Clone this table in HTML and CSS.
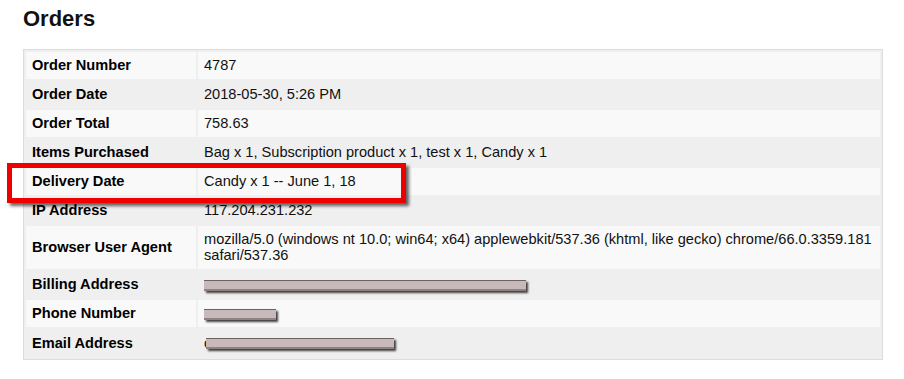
FILE: index.html
```html
<!DOCTYPE html>
<html>
<head>
<meta charset="utf-8">
<link rel="stylesheet" href="styles.css">
</head>
<body>
<div class="page">
  <h2 class="title">Orders</h2>
  <table class="orders">
    <tr class="odd"><th>Order Number</th><td>4787</td></tr>
    <tr class="even"><th>Order Date</th><td>2018-05-30, 5:26 PM</td></tr>
    <tr class="odd"><th>Order Total</th><td>758.63</td></tr>
    <tr class="even"><th>Items Purchased</th><td>Bag x 1, Subscription product x 1, test x 1, Candy x 1</td></tr>
    <tr class="odd"><th>Delivery Date</th><td>Candy x 1 -- June 1, 18</td></tr>
    <tr class="even"><th>IP Address</th><td>117.204.231.232</td></tr>
    <tr class="odd"><th>Browser User Agent</th><td>mozilla/5.0 (windows nt 10.0; win64; x64) applewebkit/537.36 (khtml, like gecko) chrome/66.0.3359.181 safari/537.36</td></tr>
    <tr class="even"><th>Billing Address</th><td><span class="redact r-billing"></span></td></tr>
    <tr class="odd"><th>Phone Number</th><td><span class="redact r-phone"></span></td></tr>
    <tr class="even"><th>Email Address</th><td><span class="peek">c</span><span class="redact r-email"></span></td></tr>
  </table>
  <div class="highlight"></div>
</div>
</body>
</html>
```
FILE: styles.css
```css
html, body {
  margin: 0;
  padding: 0;
  background: #fff;
}
.page {
  position: relative;
  padding: 6px 0 0 23px;
  font-family: "Liberation Sans", Arial, sans-serif;
  color: #000;
}
.title {
  margin: 0 0 18px;
  font-size: 22px;
  line-height: 25px;
  font-weight: bold;
  color: #111;
}
.orders {
  width: 860px;
  border: 1px solid #dcdcdc;
  border-collapse: separate;
  border-spacing: 2px;
  background: #efefef;
  font-size: 14.6px;
  line-height: 16px;
}
.orders th,
.orders td {
  padding: 5px 6px 6px;
  text-align: left;
  vertical-align: middle;
}
.orders th {
  width: 158px;
  font-weight: bold;
  color: #000;
}
.orders td {
  color: #111;
}
.orders tr.odd th,
.orders tr.odd td {
  background: #f9f9f9;
}
.orders tr.even th,
.orders tr.even td {
  background: #efefef;
}
.redact {
  display: inline-block;
  height: 8px;
  vertical-align: middle;
  background: #c8baba;
  border-top: 1px solid #6d6262;
  border-bottom: 2px solid #8e8282;
  box-shadow: 2px 2px 2px rgba(0, 0, 0, 0.75);
}
.r-billing { width: 322px; }
.r-phone { width: 72px; }
.r-email { width: 188px; margin-left: -6px; }
.peek {
  display: inline-block;
  width: 8px;
  overflow: hidden;
  vertical-align: middle;
}
.highlight {
  position: absolute;
  left: 7px;
  top: 163px;
  width: 389px;
  height: 30px;
  border: 5px solid #ee0000;
  box-shadow: 3px 3px 3px rgba(0, 0, 0, 0.6);
}
```
